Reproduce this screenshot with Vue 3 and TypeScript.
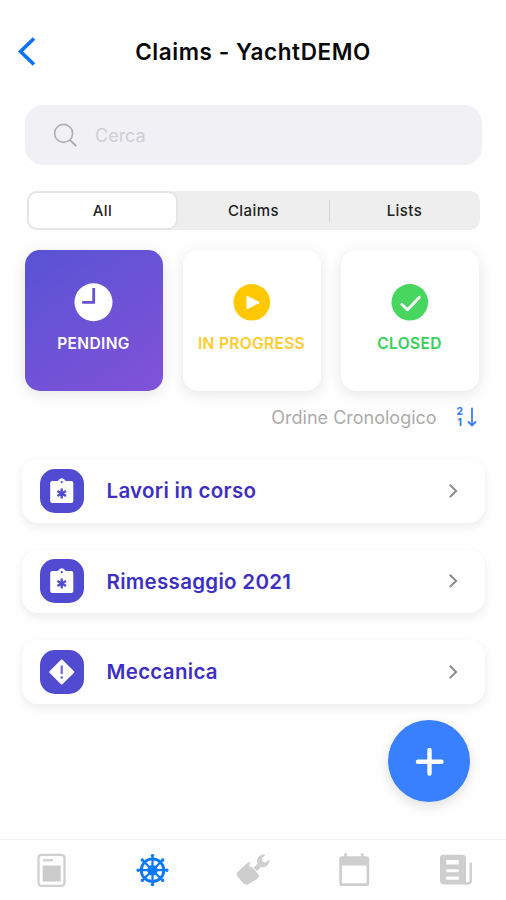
<script setup lang="ts">
import { ref } from 'vue'

type Status = 'pending' | 'progress' | 'closed'
interface ClaimRow {
  title: string
  icon: 'clipboard' | 'alert'
}

const segments: string[] = ['All', 'Claims', 'Lists']
const activeSegment = ref(0)
const activeStatus = ref<Status>('pending')
const statuses: { id: Status; label: string }[] = [
  { id: 'pending', label: 'PENDING' },
  { id: 'progress', label: 'IN PROGRESS' },
  { id: 'closed', label: 'CLOSED' },
]
const rows: ClaimRow[] = [
  { title: 'Lavori in corso', icon: 'clipboard' },
  { title: 'Rimessaggio 2021', icon: 'clipboard' },
  { title: 'Meccanica', icon: 'alert' },
]
const spokes: number[] = [0, 45, 90, 135, 180, 225, 270, 315]
</script>

<template>
  <div class="screen">
    <header class="header">
      <button class="back" aria-label="Back">
        <svg width="20" height="30" viewBox="0 0 20 30"><path d="M18 1.500 4.500 14.500 18 27.500" fill="none" stroke="#0a72ff" stroke-width="3.6" /></svg>
      </button>
      <h1 class="title">Claims - YachtDEMO</h1>
    </header>

    <div class="search">
      <svg width="24" height="24" viewBox="0 0 24 24" fill="none" stroke="#aeaeb2" stroke-width="1.6"><circle cx="10.6" cy="10.4" r="9" /><path d="m17 17 6.200 6" stroke-width="1.9" /></svg>
      <span class="placeholder">Cerca</span>
    </div>

    <div class="segments">
      <button
        v-for="(name, i) in segments"
        :key="name"
        class="segment"
        :class="{ active: i === activeSegment, divided: i > 1 }"
        @click="activeSegment = i"
      >{{ name }}</button>
    </div>

    <div class="cards">
      <button
        v-for="s in statuses"
        :key="s.id"
        class="card"
        :class="[s.id, { selected: s.id === activeStatus }]"
        @click="activeStatus = s.id"
      >
        <svg class="status-icon" viewBox="0 0 38 38">
          <template v-if="s.id === 'pending'">
            <circle cx="18.500" cy="19.300" r="19" fill="#fff" />
            <path d="M18.700 5V19.300H7.200" fill="none" stroke="#6452d6" stroke-width="2.800" />
          </template>
          <template v-else-if="s.id === 'progress'">
            <circle cx="18.800" cy="19.300" r="18.300" fill="#ffc800" />
            <path d="M14 13.200v12.600L26.500 19.500z" fill="#fff" stroke="#fff" stroke-linejoin="round" />
          </template>
          <template v-else>
            <circle cx="18.800" cy="19.300" r="18.300" fill="#47d65e" />
            <path d="m10.800 21.300 5.700 5.500L28.400 14.300" fill="none" stroke="#fff" stroke-width="2.800" stroke-linecap="round" stroke-linejoin="round" />
          </template>
        </svg>
        <span class="status-label">{{ s.label }}</span>
      </button>
    </div>

    <div class="sort">
      <span class="sort-text">Ordine Cronologico</span>
      <span class="sort-icon">
        <span class="sort-digits"><span>2</span><span>1</span></span>
        <svg width="10" height="20" viewBox="0 0 10 20" fill="none" stroke="#3f7df5"><path d="M5 .8v17" stroke-width="1.8" /><path d="m1 14.500 4 3.900 4-3.900" stroke-width="2" /></svg>
      </span>
    </div>

    <main class="list">
      <div v-for="row in rows" :key="row.title" class="row">
        <span class="badge">
          <svg v-if="row.icon === 'clipboard'" width="24" height="28" viewBox="0 0 24 28">
            <path d="M2.200 4H7.500q1-.1 1.400-1.200Q9.600 1.200 11.700 1.200t2.900 1.600Q15 3.900 16 4h5.300q2 0 2 2v18q0 2-2 2H2.200q-2 0-2-2V6q0-2 2-2Z" fill="#fff" />
            <circle cx="11.700" cy="5.200" r="1.100" fill="#514bd1" />
            <path d="M11.700 11.500v10M7.400 14l8.600 5m0-5-8.600 5" stroke="#514bd1" stroke-width="2.300" fill="none" />
          </svg>
          <svg v-else width="28" height="28" viewBox="0 0 28 28">
            <path d="M13.700 2.500 25.300 14 13.700 25.500 2.200 14Z" fill="#fff" stroke="#fff" stroke-width="2" stroke-linejoin="round" />
            <path d="M13.700 7.500v8.500" stroke="#6d67da" stroke-width="2.200" />
            <circle cx="13.700" cy="19.500" r="1.300" fill="#6d67da" />
          </svg>
        </span>
        <span class="row-title">{{ row.title }}</span>
        <svg class="chevron" width="10" height="16" viewBox="0 0 10 16"><path d="m1.800 1.700 6.300 6.200-6.300 6.200" fill="none" stroke="#8a8a8a" stroke-width="2" /></svg>
      </div>
    </main>

    <button class="fab" aria-label="Add">
      <svg width="30" height="30" viewBox="0 0 30 30"><path d="M15.500 4v23.500M4 15.800h23.500" stroke="#fff" stroke-width="4.400" stroke-linecap="round" /></svg>
    </button>

    <nav class="tabs">
      <button class="tab">
        <svg width="34" height="34" viewBox="0 0 34 34">
          <rect x="4.500" y="1.800" width="26" height="31" rx="3" fill="none" stroke="#d0d0d0" stroke-width="2.300" />
          <path d="M9 7.200h10" stroke="#d3d3d3" stroke-width="2.500" />
          <rect x="8.700" y="12.500" width="18" height="16" fill="#cbcbcb" />
        </svg>
      </button>
      <button class="tab">
        <svg width="34" height="34" viewBox="-17.500 -17.200 34 34">
          <circle r="11.300" fill="none" stroke="#0b79ff" stroke-width="2.800" />
          <circle r="5.300" fill="#0b79ff" />
          <g stroke="#0b79ff" stroke-width="2.200" stroke-linecap="round">
            <g v-for="angle in spokes" :key="angle" :transform="`rotate(${angle})`">
              <path d="M0 0V-15" /><path d="M-.7-14.500h1.400" />
            </g>
          </g>
        </svg>
      </button>
      <button class="tab">
        <svg width="34" height="34" viewBox="0 0 34 34">
          <path d="M1.200 19.500Q0 21.500 1.300 23.300L7 30Q9 32.600 12 31.500L21.500 25.500Q24 23.500 22.200 21L16.300 14.200 13.800 13.800 13.300 11.300 15 9Q11.500 8.800 9 12.200Z" fill="#cecece" />
          <path d="m19.200 16.300 5.600-5.300" stroke="#cecece" stroke-width="4.800" />
          <path d="M29.500 1.800Q24.500.8 21.700 5.200 20 8.800 22.300 12.400 25.800 15.600 29.800 13.500 33.300 11.400 33.500 6.300L29.700 9.500 26.500 8.700 26 5.200Z" fill="#cecece" />
        </svg>
      </button>
      <button class="tab">
        <svg width="34" height="34" viewBox="0 0 34 34">
          <path d="M8.600.3v5M25.200.3v5" stroke="#cecece" stroke-width="2.600" />
          <path d="M5 3.200h24.500q2.700 0 2.700 2.700v24.500q0 2.700-2.700 2.700H5Q2.300 33.100 2.300 30.400V5.900Q2.300 3.200 5 3.200Zm-.1 9.300V30.300h24.700V12.500Z" fill="#cecece" fill-rule="evenodd" />
        </svg>
      </button>
      <button class="tab">
        <svg width="34" height="34" viewBox="0 0 34 34">
          <path d="M5 1.800H24q4 0 4 4V31.500H6q-4 0-4-4V4.800q0-3 3-3ZM8.200 7v4.500h12.600V7Zm0 9.300v3h12.600v-3Zm0 7.200v3.300h12.600v-3.300Z" fill="#cecece" fill-rule="evenodd" />
          <path d="M32.800 9.500v17.800q0 3.200-3.200 3.200H27" fill="none" stroke="#cecece" stroke-width="2.300" />
        </svg>
      </button>
    </nav>
  </div>
</template>

<style>
body {
  margin: 0;
  background: #fff;
}
</style>

<style scoped>
.screen {
  position: relative;
  box-sizing: border-box;
  width: 506px;
  height: 900px;
  display: flex;
  flex-direction: column;
  background: #fefefe;
  font-family: Inter, "Liberation Sans", sans-serif;
  overflow: hidden;
}
button {
  border: 0;
  padding: 0;
  margin: 0;
  background: none;
  font: inherit;
  color: inherit;
}
svg {
  display: block;
  flex: none;
}
.header {
  flex: none;
  display: grid;
  grid-template-columns: 60px 1fr 60px;
  align-items: center;
  height: 104px;
}
.back {
  padding-left: 16px;
}
.title {
  margin: 0;
  text-align: center;
  font-size: 22.500px;
  line-height: 28px;
  font-weight: 600;
  letter-spacing: 0.570px;
  color: #080808;
  white-space: nowrap;
}
.search {
  flex: none;
  display: flex;
  align-items: center;
  gap: 18px;
  box-sizing: border-box;
  height: 60.500px;
  margin: 0.500px 24px 0 25px;
  padding-left: 28px;
  border-radius: 18px;
  background: #f1f0f5;
}
.placeholder {
  padding-top: 1px;
  font-size: 18px;
  color: #d0cfd4;
}
.segments {
  flex: none;
  display: grid;
  grid-template-columns: repeat(3, 1fr);
  box-sizing: border-box;
  height: 39px;
  margin: 26px 26px 0 27px;
  border-radius: 10px;
  background: #eee;
}
.segment {
  position: relative;
  font-size: 15px;
  font-weight: 500;
  letter-spacing: 0.450px;
  color: #222;
}
.segment.active {
  box-sizing: border-box;
  border-radius: 10px;
  background: #fff;
  border: 2.500px solid #e5e5e5;
}
.segment.divided::before {
  content: "";
  position: absolute;
  left: 0;
  top: 9px;
  width: 1px;
  height: 22px;
  background: #d4d4d4;
}
.cards {
  flex: none;
  display: grid;
  grid-template-columns: repeat(3, 138px);
  column-gap: 20px;
  margin: 20px 0 0 25px;
}
.card {
  display: flex;
  flex-direction: column;
  align-items: center;
  box-sizing: border-box;
  height: 141px;
  padding-top: 33px;
  border-radius: 15px;
  background: #fff;
  box-shadow: 0 3px 14px rgba(0, 0, 0, 0.1);
}
.card.selected {
  background: linear-gradient(145deg, #5853d4, #8152d8);
}
.status-icon {
  width: 38px;
  height: 38px;
  overflow: visible;
}
.status-label {
  margin: 13px 1px 0 0;
  font-size: 15.500px;
  line-height: 20px;
  font-weight: 600;
  letter-spacing: 0.350px;
  white-space: nowrap;
}
.pending {
  color: #fff;
}
.progress {
  color: #ffcb2b;
}
.closed {
  color: #35d056;
}
.sort {
  flex: none;
  display: flex;
  justify-content: flex-end;
  align-items: center;
  gap: 20px;
  height: 26px;
  margin: 13px 29px 0 0;
}
.sort-text {
  font-size: 18px;
  color: #acacac;
  white-space: nowrap;
}
.sort-icon {
  display: flex;
  align-items: center;
  gap: 4px;
}
.sort-digits {
  display: flex;
  flex-direction: column;
  align-items: center;
  font-size: 10px;
  line-height: 11px;
  font-weight: 800;
  color: #3f7df5;
}
.list {
  flex: none;
  display: flex;
  flex-direction: column;
  gap: 27px;
  margin: 29px 21px 0 22px;
}
.row {
  display: flex;
  align-items: center;
  box-sizing: border-box;
  height: 63.500px;
  padding: 0 27px 0 18px;
  border-radius: 16px;
  background: #fff;
  box-shadow: 0 4px 10px rgba(0, 0, 0, 0.07);
}
.badge {
  flex: none;
  display: flex;
  align-items: center;
  justify-content: center;
  width: 44px;
  height: 44px;
  border-radius: 15px;
  background: #514bd1;
}
.row-title {
  flex: 1;
  margin-left: 22.500px;
  font-size: 20.500px;
  font-weight: 600;
  letter-spacing: 0.300px;
  color: #3d2fc4;
  white-space: nowrap;
}
.fab {
  position: absolute;
  left: 388px;
  top: 720px;
  display: flex;
  align-items: center;
  justify-content: center;
  width: 82px;
  height: 82px;
  border-radius: 50%;
  background: #3880ff;
  box-shadow: 0 4px 12px rgba(0, 0, 0, 0.12);
}
.tabs {
  flex: none;
  display: grid;
  grid-template-columns: repeat(5, 1fr);
  box-sizing: border-box;
  height: 61px;
  margin-top: auto;
  border-top: 1px solid #f2f2f2;
}
.tab {
  display: flex;
  justify-content: center;
  padding-top: 13px;
}
</style>
